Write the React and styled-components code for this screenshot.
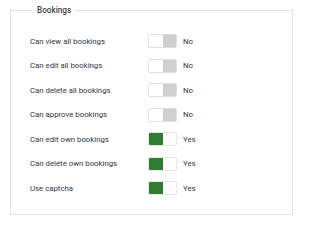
import React from 'react';
import styled, { createGlobalStyle } from 'styled-components';

const GlobalStyle = createGlobalStyle`
  html, body {
    margin: 0;
    padding: 0;
    background: #fff;
  }
  body {
    font-family: Roboto, "Liberation Sans", sans-serif;
    color: #343a46;
  }
`;

const Page = styled.div`
  padding: 5px 7px 0 10px;
`;

const Group = styled.fieldset`
  margin: 0;
  width: 283px;
  box-sizing: border-box;
  border: 1px solid #e2e2e2;
  padding: 14px 0 13px 19px;
  min-width: 0;
`;

const Legend = styled.legend`
  margin-left: 3px;
  padding: 0 4px;
  font-size: 8.2px;
  line-height: 10px;
  font-weight: 500;
  color: #3a3f4a;
`;

const List = styled.div`
  display: grid;
  grid-template-columns: 118px 29px auto;
  grid-auto-rows: 24.5px;
  align-items: center;
`;

const Label = styled.span`
  font-size: 7.8px;
  color: #30364a;
  white-space: nowrap;
`;

const Switch = styled.span`
  display: flex;
  width: 29px;
  height: 14px;
  box-sizing: border-box;
  border: 1px solid ${p => (p.$on ? '#e6e6e6' : '#e0e0e0')};
  border-radius: 2px;
  overflow: hidden;
`;

const Half = styled.span`
  flex: 1;
  background: ${p => p.$fill || '#fff'};
`;

const State = styled.span`
  margin-left: 6px;
  font-size: 7.8px;
  color: #30364a;
`;

const rows = [
  ['Can view all bookings', false],
  ['Can edit all bookings', false],
  ['Can delete all bookings', false],
  ['Can approve bookings', false],
  ['Can edit own bookings', true],
  ['Can delete own bookings', true],
  ['Use captcha', true],
];

export default function App() {
  return (
    <Page>
      <GlobalStyle />
      <Group>
        <Legend>Bookings</Legend>
        <List>
          {rows.map(([text, on]) => (
            <React.Fragment key={text}>
              <Label>{text}</Label>
              <Switch $on={on}>
                {on ? (
                  <>
                    <Half $fill="#2e7d32" />
                    <Half />
                  </>
                ) : (
                  <>
                    <Half />
                    <Half $fill="#cfcfcf" />
                  </>
                )}
              </Switch>
              <State>{on ? 'Yes' : 'No'}</State>
            </React.Fragment>
          ))}
        </List>
      </Group>
    </Page>
  );
}
